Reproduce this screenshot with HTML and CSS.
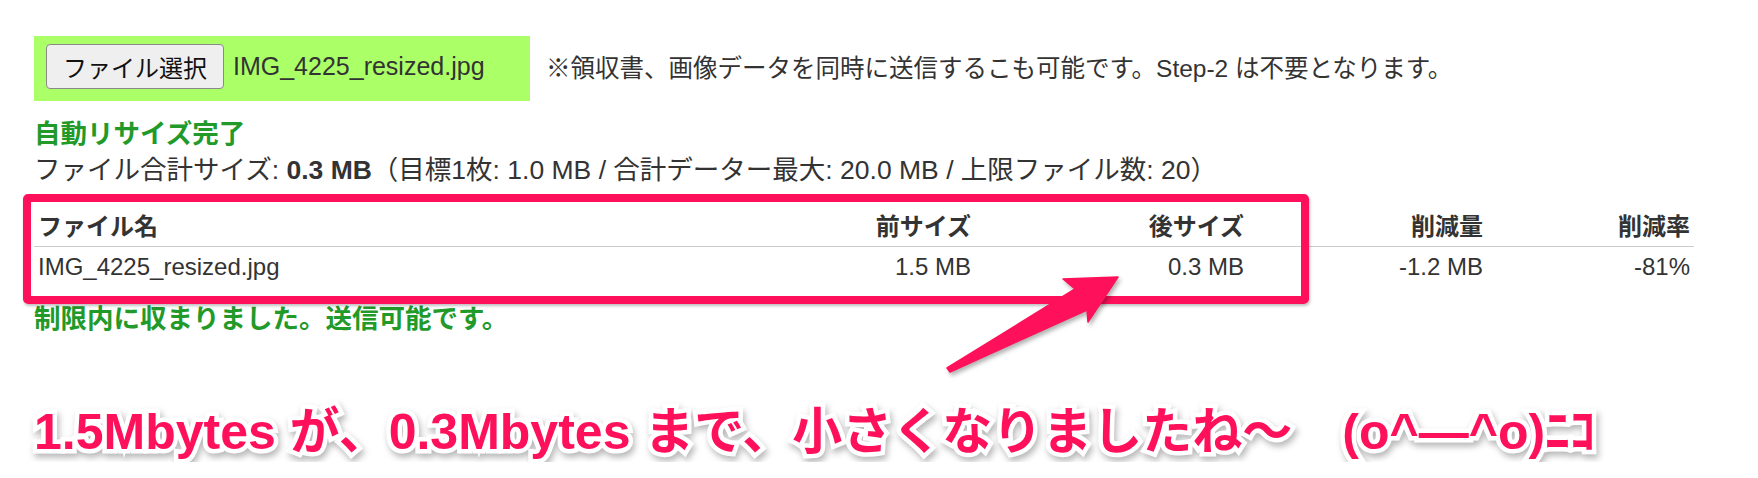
FILE: index.html
```html
<!DOCTYPE html>
<html lang="ja">
<head>
    <meta charset="UTF-8">
    <meta name="viewport" content="width=device-width, initial-scale=1.0">
    <title>ファイル自動リサイズ</title>
    <link rel="stylesheet" href="styles.css">
</head>
<body>
    <div class="page">
        <div class="upload-row">
            <div class="upload-box">
                <button class="file-btn" type="button">ファイル選択</button>
                <span class="file-name">IMG_4225_resized.jpg</span>
            </div>
            <p class="note">※領収書、画像データを同時に送信するこも可能です。Step-2 は不要となります。</p>
        </div>

        <p class="status">自動リサイズ完了</p>
        <p class="summary">ファイル合計サイズ: <b>0.3 MB</b>（目標1枚: 1.0 MB / 合計データー最大: 20.0 MB / 上限ファイル数: 20）</p>

        <table class="result-table">
            <colgroup>
                <col>
                <col class="col-before">
                <col class="col-after">
                <col class="col-diff">
                <col class="col-rate">
            </colgroup>
            <thead>
                <tr>
                    <th>ファイル名</th>
                    <th class="num">前サイズ</th>
                    <th class="num">後サイズ</th>
                    <th class="num">削減量</th>
                    <th class="num">削減率</th>
                </tr>
            </thead>
            <tbody>
                <tr>
                    <td>IMG_4225_resized.jpg</td>
                    <td class="num">1.5 MB</td>
                    <td class="num">0.3 MB</td>
                    <td class="num">-1.2 MB</td>
                    <td class="num">-81%</td>
                </tr>
            </tbody>
        </table>

        <p class="status ok">制限内に収まりました。送信可能です。</p>

        <p class="callout">1.5Mbytes が、0.3Mbytes まで、小さくなりましたね～　(o^―^o)ﾆｺ</p>
    </div>

    <!-- annotation overlays -->
    <div class="mark-box"></div>
    <svg class="mark-arrow" width="190" height="110" viewBox="0 0 190 110">
        <path d="M178 7 L123 9 L135 19 L7 98 L10 102 L147 40 L148 52 Z" fill="#fe115a" stroke="#fe115a" stroke-width="1.5" stroke-linejoin="round"/>
    </svg>
</body>
</html>
```

FILE: styles.css
```css
body {
    margin: 0;
    background-color: #fff;
    color: #333;
    font-family: "Liberation Sans", Arial, "Noto Sans CJK JP", sans-serif;
    font-size: 24px;
}
.page {
    padding: 36px 0 0 34px;
}
p {
    margin: 0;
}
.upload-row {
    display: flex;
    align-items: center;
    gap: 16px;
}
.upload-box {
    display: flex;
    align-items: center;
    box-sizing: border-box;
    width: 496px;
    height: 65px;
    padding: 0 12px 4px;
    background-color: #abff67;
}
.file-btn {
    height: 45px;
    padding: 0 16px;
    font-family: "Noto Sans CJK JP", sans-serif;
    font-size: 24px;
    color: #111;
    background-color: #efefef;
    border: 1px solid #8a8a8a;
    border-radius: 4px;
}
.file-name {
    margin-left: 9px;
    font-size: 25px;
}
.note {
    line-height: 36px;
    font-size: 24.5px;
}
.status {
    margin-top: 15px;
    line-height: 36px;
    font-size: 26.5px;
    font-weight: bold;
    color: #229a2a;
}
.summary {
    line-height: 37px;
    font-size: 26.5px;
}
.result-table {
    width: 1660px;
    margin-top: 18px;
    border-collapse: collapse;
    table-layout: fixed;
}
.col-before {
    width: 246px;
}
.col-after {
    width: 273px;
}
.col-diff {
    width: 239px;
}
.col-rate {
    width: 207px;
}
.result-table th,
.result-table td {
    padding: 5px 4px;
    line-height: 30px;
    text-align: left;
    white-space: nowrap;
}
.result-table th {
    padding-bottom: 4px;
    border-bottom: 1px solid #ccc;
}
.result-table .num {
    text-align: right;
}
.status.ok {
    margin-top: 14px;
}
.callout {
    margin-top: 65px;
    line-height: 60px;
    font-size: 50px;
    font-weight: bold;
    color: #fe115a;
    -webkit-text-stroke: 9px #fff;
    paint-order: stroke fill;
    filter: drop-shadow(2px 4px 3px rgba(0, 0, 0, 0.28));
}
.mark-box {
    position: absolute;
    left: 23px;
    top: 194px;
    width: 1286px;
    height: 110px;
    box-sizing: border-box;
    border: 8px solid #fe115a;
    border-radius: 5px;
    box-shadow: 1px 2px 3px rgba(0, 0, 0, 0.25);
}
.mark-arrow {
    position: absolute;
    left: 940px;
    top: 270px;
    filter: drop-shadow(2px 3px 2px rgba(0, 0, 0, 0.3));
}
```
